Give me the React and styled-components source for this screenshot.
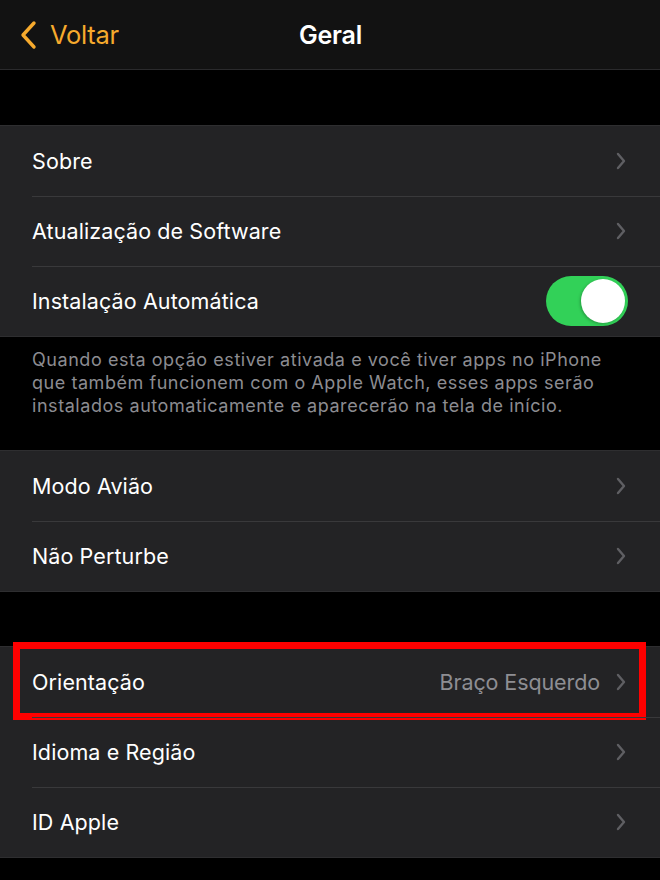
import React from "react";
import styled, { createGlobalStyle } from "styled-components";

const Global = createGlobalStyle`
  html, body { margin: 0; padding: 0; background: #000; }
  body { font-family: Inter, "Liberation Sans", sans-serif; -webkit-font-smoothing: antialiased; }
`;

const Page = styled.div`
  width: 660px;
  height: 880px;
  background: #000;
  overflow: hidden;
  display: flex;
  flex-direction: column;
`;

const NavBar = styled.div`
  height: 70px;
  background: #121212;
  border-bottom: 1px solid #2a2a2c;
  display: grid;
  grid-template-columns: 1fr auto 1fr;
  align-items: center;
  padding: 0 18px 0 19px;
  box-sizing: border-box;
`;

const BackButton = styled.div`
  display: flex;
  align-items: center;
  gap: 13px;
  color: #f6aa2d;
  font-size: 25.5px;
  letter-spacing: -0.3px;
`;

const Title = styled.div`
  color: #fff;
  font-size: 25px;
  font-weight: 600;
  letter-spacing: -0.2px;
`;

const Spacer = styled.div`
  height: ${(p) => p.$h}px;
  flex-shrink: 0;
`;

const Group = styled.div`
  background: #232325;
  border-top: 1px solid #2e2e30;
  border-bottom: 1px solid #2e2e30;
  display: flex;
  flex-direction: column;
`;

const Row = styled.div`
  position: relative;
  height: 70px;
  display: flex;
  align-items: center;
  padding: 0 33px 0 32px;
  box-sizing: border-box;
  & + &::before {
    content: "";
    position: absolute;
    left: 32px;
    right: 0;
    top: 0;
    height: 1px;
    background: #39393b;
  }
`;

const Label = styled.div`
  flex: 1;
  color: #fff;
  font-size: 21.5px;
  letter-spacing: 0.1px;
`;

const Value = styled.div`
  color: #8e8e93;
  font-size: 21.5px;
  letter-spacing: -0.1px;
  margin-right: 15px;
`;

const Footer = styled.div`
  padding: 11px 40px 0 32px;
  color: #8c8c91;
  font-size: 18px;
  letter-spacing: 0.55px;
  line-height: 23px;
  height: 113px;
  box-sizing: border-box;
`;

const Switch = styled.div`
  width: 82px;
  height: 50px;
  border-radius: 25px;
  background: #32d158;
  position: relative;
  margin-right: -1px;
`;

const Knob = styled.div`
  position: absolute;
  right: 3px;
  top: 3px;
  width: 44px;
  height: 44px;
  border-radius: 50%;
  background: #fff;
  box-shadow: -1px 1px 3px rgba(0, 0, 0, 0.25);
`;

const Highlight = styled.div`
  position: absolute;
  left: 13px;
  right: 14px;
  top: -5px;
  bottom: -3px;
  border: 7px solid #ff0000;
  pointer-events: none;
`;

const Chevron = () => (
  <svg width="12" height="20" viewBox="0 0 12 20">
    <path d="M3 3 L9 10 L3 17" fill="none" stroke="#5f5f63" strokeWidth="2.4" strokeLinecap="round" strokeLinejoin="round" />
  </svg>
);

const BackChevron = () => (
  <svg width="18" height="30" viewBox="0 0 18 30">
    <path d="M15 3 L4 15 L15 27" fill="none" stroke="#f6aa2d" strokeWidth="3.4" strokeLinecap="round" strokeLinejoin="round" />
  </svg>
);

const NavRow = ({ label, value, highlighted }) => (
  <Row>
    <Label>{label}</Label>
    {value && <Value>{value}</Value>}
    <Chevron />
    {highlighted && <Highlight />}
  </Row>
);

export default function App() {
  return (
    <Page>
      <Global />
      <NavBar>
        <BackButton>
          <BackChevron />
          Voltar
        </BackButton>
        <Title>Geral</Title>
        <div />
      </NavBar>
      <Spacer $h={55} />
      <Group>
        <NavRow label="Sobre" />
        <NavRow label="Atualização de Software" />
        <Row>
          <Label>Instalação Automática</Label>
          <Switch>
            <Knob />
          </Switch>
        </Row>
      </Group>
      <Footer>
        Quando esta opção estiver ativada e você tiver apps no iPhone que também funcionem com o Apple Watch, esses apps serão instalados automaticamente e aparecerão na tela de início.
      </Footer>
      <Group>
        <NavRow label="Modo Avião" />
        <NavRow label="Não Perturbe" />
      </Group>
      <Spacer $h={54} />
      <Group>
        <NavRow label="Orientação" value="Braço Esquerdo" highlighted />
        <NavRow label="Idioma e Região" />
        <NavRow label="ID Apple" />
      </Group>
    </Page>
  );
}
